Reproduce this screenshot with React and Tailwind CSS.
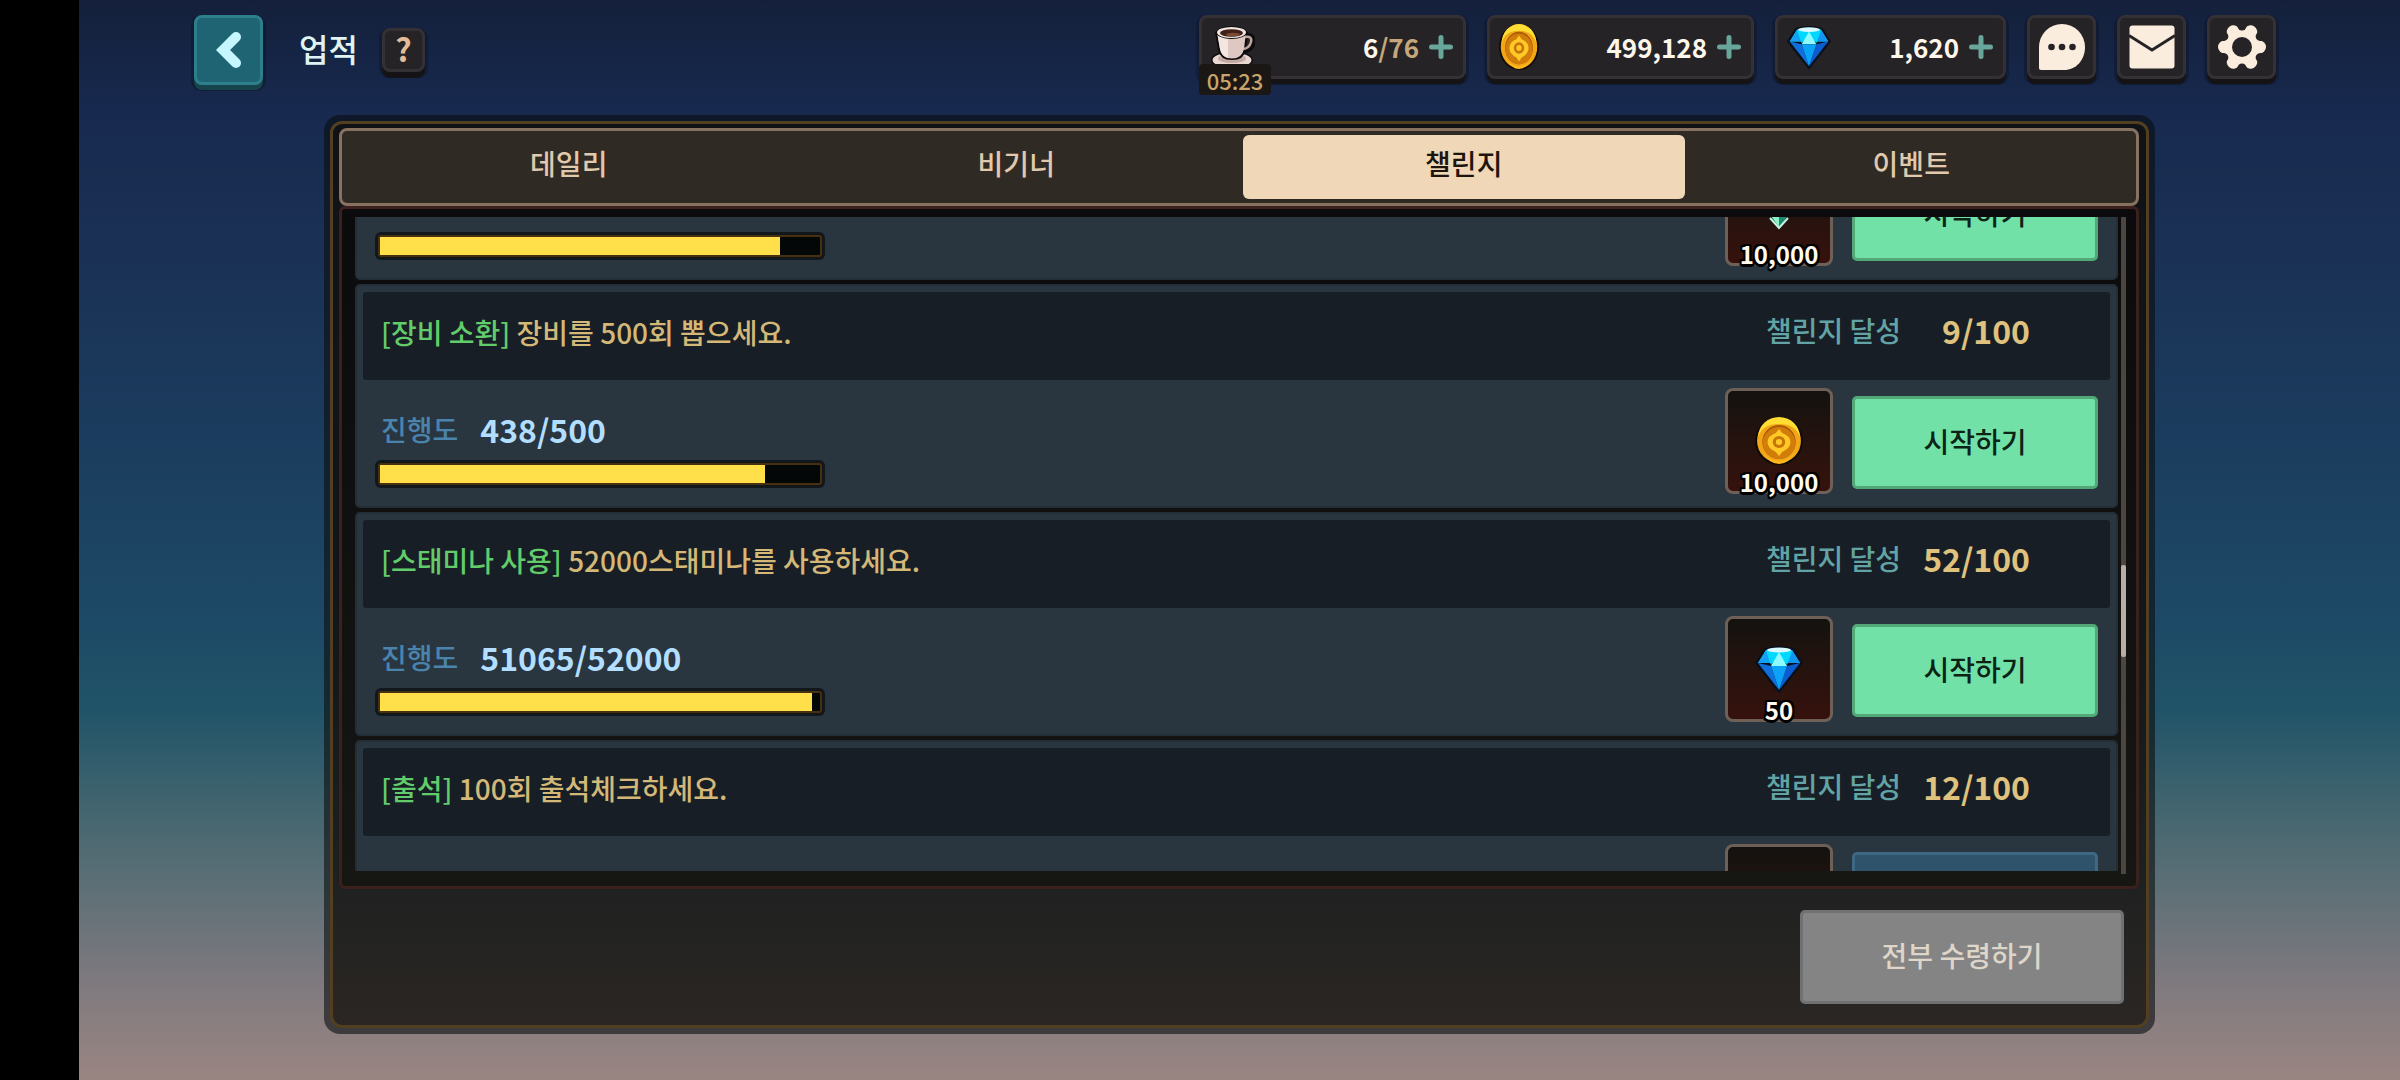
import React, { useState } from "react";

const TABS = ["데일리", "비기너", "챌린지", "이벤트"];

const CHALLENGES = [
  {
    id: 1,
    progress: 910,
    goal: 1000,
    reward: "emerald",
    amount: "10,000",
    status: "ready",
  },
  {
    id: 2,
    tag: "장비 소환",
    text: "장비를 500회 뽑으세요.",
    count: "9/100",
    progress: 438,
    goal: 500,
    reward: "coin",
    amount: "10,000",
    status: "ready",
  },
  {
    id: 3,
    tag: "스태미나 사용",
    text: "52000스태미나를 사용하세요.",
    count: "52/100",
    progress: 51065,
    goal: 52000,
    reward: "gem",
    amount: "50",
    status: "ready",
  },
  {
    id: 4,
    tag: "출석",
    text: "100회 출석체크하세요.",
    count: "12/100",
    status: "waiting",
  },
];

const CoffeeIcon = ({ className }) => (
  <svg viewBox="0 0 44 46" className={className} aria-hidden="true">
    <ellipse cx="21" cy="36" rx="21" ry="9" fill="#0c0b0d" />
    <ellipse cx="21" cy="36" rx="19.5" ry="7.5" fill="#e9d8d2" />
    <ellipse cx="21" cy="34.5" rx="14" ry="4.5" fill="#c5aaa3" />
    <path
      d="M34 12c7-2 9 2 8 7s-5 8-10 8"
      fill="none"
      stroke="#0c0b0d"
      strokeWidth="5"
    />
    <path d="M4 8h33l-2 18q-2 10-14 10T7 26z" fill="#0c0b0d" />
    <path
      d="M34 13c5-1 7 1 6 5s-4 7-9 7"
      fill="none"
      stroke="#bfa39c"
      strokeWidth="2.5"
    />
    <path d="M6 8h29l-2 17q-2 9.500-12 9.500T9 25z" fill="#dfc8c1" />
    <path d="M6 8h11v26Q10 32 9 25z" fill="#f3e6e1" />
    <ellipse cx="20.500" cy="8.500" rx="15.500" ry="6.500" fill="#0c0b0d" />
    <ellipse cx="20.500" cy="8.500" rx="14.500" ry="5.500" fill="#f2e4df" />
    <ellipse cx="20.500" cy="9" rx="11.500" ry="3.800" fill="#3f2117" />
    <ellipse cx="22" cy="10.500" rx="7" ry="1.800" fill="#7a4a34" />
  </svg>
);

const CoinIcon = ({ className }) => (
  <svg
    viewBox="0 0 46 48"
    preserveAspectRatio="none"
    className={className}
    aria-hidden="true"
  >
    <ellipse cx="23" cy="24" rx="23" ry="24" fill="#0f0b08" />
    <ellipse cx="23" cy="24" rx="21" ry="22" fill="#f2a516" />
    <path d="M3 20a20 20 0 0 1 40 0q-4-13-20-13T3 20z" fill="#ffdd33" />
    <ellipse cx="23" cy="25" rx="16" ry="17" fill="#a85c06" />
    <ellipse cx="23" cy="26" rx="15.500" ry="16" fill="#d27d0a" />
    <path
      d="M23 12l3 4q8 3 8 9t-8 10l-3 4-3-4q-8-4-8-10t8-9z"
      fill="#ffc928"
    />
    <circle cx="23" cy="25" r="6" fill="#c87508" />
    <circle cx="23" cy="25" r="3" fill="#ffc928" />
    <path d="M8 36q6 8 15 8t15-8q-6 11-15 11T8 36z" fill="#ffb81c" />
  </svg>
);

const GemIcon = ({ className }) => (
  <svg viewBox="0 0 48 48" className={className} aria-hidden="true">
    <path
      d="M10 4q14-4 28 0l9 14-23 29L1 18z"
      fill="#08101c"
      stroke="#08101c"
      strokeWidth="2"
      strokeLinejoin="round"
    />
    <path d="M11 5q13-3 26 0l8 13H3z" fill="#00c8fa" />
    <path d="M11 5L3 18h13z" fill="#14a0f5" />
    <path d="M37 5l8 13H32z" fill="#1195f0" />
    <path d="M11 6l5 14 8-13z" fill="#00d9ff" />
    <path d="M37 6l-5 14-8-13z" fill="#00d9ff" />
    <path d="M24 7l-8 14h16z" fill="#8dfbff" />
    <path d="M3 18l13 3 8 24z" fill="#0f6fdc" />
    <path d="M45 18l-13 3-8 24z" fill="#0a5cd0" />
    <path d="M16 21h16l-8 24z" fill="#0aa3f8" />
    <ellipse cx="24" cy="5" rx="12" ry="2.500" fill="#d9f8ff" />
  </svg>
);

const EmeraldIcon = ({ className }) => (
  <svg viewBox="0 0 48 48" className={className} aria-hidden="true">
    <path d="M24 0l14 18-14 22-14-22z" fill="#1f8a70" />
    <path d="M24 0v38L10 18z" fill="#8ff0c8" />
    <path d="M24 12l6 7-6 10-6-10z" fill="#2fb892" />
    <path d="M15 29l9 10 9-10" fill="none" stroke="#c4f5e0" strokeWidth="2" />
  </svg>
);

const PlusIcon = () => (
  <svg viewBox="0 0 24 24" className="h-6 w-6" aria-hidden="true">
    <path
      d="M12 2.500v19M2.500 12h19"
      stroke="#68a69c"
      strokeWidth="5"
      strokeLinecap="round"
    />
  </svg>
);

const ChevronIcon = () => (
  <svg viewBox="0 0 26 38" className="h-[38px] w-[26px]" aria-hidden="true">
    <path
      d="M20 6L7 19l13 13"
      fill="none"
      stroke="#c6f6ff"
      strokeWidth="10"
      strokeLinecap="round"
      strokeLinejoin="miter"
    />
  </svg>
);

const ChatIcon = () => (
  <svg viewBox="0 0 46 46" className="h-[46px] w-[46px]" aria-hidden="true">
    <path
      d="M23 0a23 23 0 0 1 23 23C46 36 37 46 25 46H2q-2 0-2-2V23A23 23 0 0 1 23 0z"
      fill="#fbeddd"
    />
    <circle cx="12.500" cy="23" r="3.300" fill="#262326" />
    <circle cx="23" cy="23" r="3.300" fill="#262326" />
    <circle cx="33.500" cy="23" r="3.300" fill="#262326" />
  </svg>
);

const MailIcon = () => (
  <svg viewBox="0 0 46 44" className="h-[44px] w-[46px]" aria-hidden="true">
    <rect x="0.500" y="0.500" width="45" height="43" rx="3" fill="#fbeddd" />
    <path
      d="M0 10.500L23 25l23-14.500"
      fill="none"
      stroke="#262326"
      strokeWidth="2.800"
    />
  </svg>
);

const LOBES = [0, 60, 120, 180, 240, 300];

const GearIcon = () => (
  <svg viewBox="0 0 48 48" className="h-[48px] w-[48px]" aria-hidden="true">
    <mask id="gear">
      <circle cx="24" cy="24" r="19" fill="white" />
      {LOBES.map((a) => (
        <circle
          key={a}
          cx="41.500"
          cy="24"
          r="6.500"
          fill="white"
          transform={`rotate(${a} 24 24)`}
        />
      ))}
      {LOBES.map((a) => (
        <circle
          key={a}
          cx="45"
          cy="24"
          r="4.500"
          fill="black"
          transform={`rotate(${a + 30} 24 24)`}
        />
      ))}
      <circle cx="24" cy="24" r="10" fill="black" />
    </mask>
    <rect width="48" height="48" fill="#fbeddd" mask="url(#gear)" />
  </svg>
);

const REWARD_ICONS = { coin: CoinIcon, gem: GemIcon, emerald: EmeraldIcon };

const darkTile =
  "rounded-[8px] border-[3px] border-[#343035] bg-[#262326] shadow-[0_5px_0_#151316,0_3px_0_3px_#0e142880]";

const Resource = ({ icon, label, className, children }) => (
  <div
    className={`relative flex h-16 items-center gap-2.5 pr-2.5 pl-[9px] ${darkTile} ${className}`}
  >
    {icon}
    <span className="flex-1 text-right text-[26px] leading-8 font-bold text-[#fdf6ea]">
      {children}
    </span>
    <button type="button" aria-label={`${label} 추가`}>
      <PlusIcon />
    </button>
  </div>
);

const IconButton = ({ label, children }) => (
  <button
    type="button"
    aria-label={label}
    className={`flex h-16 w-[69px] items-center justify-center ${darkTile}`}
  >
    {children}
  </button>
);

const Header = () => (
  <header className="flex items-start justify-between pt-[15px] pr-[124px] pb-[30px] pl-[115px]">
    <div className="flex items-center">
      <button
        type="button"
        aria-label="뒤로"
        className="flex h-[70px] w-[69px] items-center justify-center rounded-[8px] border-[3px] border-[#2d7f8c] bg-[#1f6472] shadow-[0_5px_0_#17444c,0_3px_0_3px_#0e142880]"
      >
        <ChevronIcon />
      </button>
      <h1 className="ml-9 pb-1 text-[32px] leading-10 font-medium text-[#dff3f2]">
        업적
      </h1>
      <button
        type="button"
        aria-label="도움말"
        className="ml-6 flex h-11 w-[43px] items-center justify-center rounded-[8px] border-[3px] border-[#343035] bg-[#262326] pb-1 text-[32px] leading-10 font-bold text-[#e2bd97] shadow-[0_6px_0_#151316,0_3px_0_3px_#0e142880]"
      >
        ?
      </button>
    </div>

    <div className="flex gap-[21px]">
      <Resource
        label="스태미나"
        className="w-[267px]"
        icon={<CoffeeIcon className="h-[46px] w-11" />}
      >
        6<span className="text-[#c6a77c]">/76</span>
        <span className="absolute top-[46px] -left-[3px] flex h-[31px] w-[72px] items-center justify-center rounded-[4px] bg-[#1b1714] text-[22px] leading-7 font-medium text-[#c9a46c]">
          05:23
        </span>
      </Resource>
      <Resource
        label="골드"
        className="w-[267px]"
        icon={<CoinIcon className="h-[46px] w-10" />}
      >
        499,128
      </Resource>
      <Resource
        label="다이아"
        className="w-[231px]"
        icon={<GemIcon className="h-11 w-11" />}
      >
        1,620
      </Resource>
      <IconButton label="채팅">
        <ChatIcon />
      </IconButton>
      <IconButton label="우편">
        <MailIcon />
      </IconButton>
      <IconButton label="설정">
        <GearIcon />
      </IconButton>
    </div>
  </header>
);

const ProgressBar = ({ value, max }) => (
  <div
    role="progressbar"
    aria-label="진행도"
    aria-valuenow={value}
    aria-valuemax={max}
    className="h-7 w-[450px] rounded-[6px] bg-[#11171b] p-[3px]"
  >
    <div className="h-full rounded-[3px] border-2 border-[#46300f] bg-[#040707]">
      <div
        className="h-full bg-[#ffdf4a]"
        style={{ width: `${(value / max) * 100}%` }}
      />
    </div>
  </div>
);

const Reward = ({ type, amount }) => {
  const Icon = REWARD_ICONS[type];
  return (
    <div className="relative mt-2 flex h-[106px] w-[108px] items-center justify-center rounded-[8px] border-[3px] border-[#6e5f57] bg-linear-to-b from-[#13120f] to-[#36110c]">
      {Icon && <Icon className="h-12 w-12" />}
      {amount && (
        <span className="absolute inset-x-0 -bottom-[3px] text-center text-[24px] leading-6 font-bold text-[#fffaf0] [text-shadow:2px_0_#000,-2px_0_#000,0_2px_#000,0_-2px_#000,2px_2px_#000,-2px_2px_#000,2px_-2px_#000,-2px_-2px_#000,0_3px_#000]">
          {amount}
        </span>
      )}
    </div>
  );
};

const ChallengeCard = ({ item }) => (
  <li className="h-56 shrink-0 rounded-[5px] border-2 border-[#232e36] bg-[#29353f] px-1.5 pt-1.5">
    <div className="flex h-[88px] items-center justify-between rounded-[3px] bg-[#181e25] pr-20 pb-2 pl-[18px] text-[28px] leading-10 font-medium">
      {item.text && (
        <>
          <p className="text-[#d3b878]">
            <span className="text-[#62cc6b]">[{item.tag}]</span> {item.text}
          </p>
          <p className="flex items-center pb-1 text-[#62a3a5]">
            챌린지 달성
            <span className="w-[129px] text-right text-[32px] font-bold text-[#dfc27d]">
              {item.count}
            </span>
          </p>
        </>
      )}
    </div>
    <div className="flex items-start justify-between px-3">
      <div className="pt-[29px]">
        <div className="h-10">
          {item.text && item.goal && (
            <p className="flex items-center gap-[22px] pl-1.5 text-[28px] leading-10 font-medium text-[#4a84ad]">
              진행도
              <span className="text-[32px] font-bold text-[#b2deff]">
                {item.progress}/{item.goal}
              </span>
            </p>
          )}
        </div>
        <div className="mt-[11px]">
          {item.goal && <ProgressBar value={item.progress} max={item.goal} />}
        </div>
      </div>
      <div className="flex items-start gap-[19px]">
        <Reward type={item.reward} amount={item.amount} />
        {item.status === "ready" ? (
          <button
            type="button"
            className="mt-4 h-[93px] w-[246px] rounded-[5px] border-[3px] border-[#52a877] bg-[#72e1a7] pb-1 text-[28px] leading-10 font-medium text-[#0c2416]"
          >
            시작하기
          </button>
        ) : (
          <button
            type="button"
            aria-label="진행중"
            className="mt-4 h-[93px] w-[246px] rounded-[5px] border-[3px] border-[#3e6884] bg-[#2f536b]"
          />
        )}
      </div>
    </div>
  </li>
);

const App = () => {
  const [tab, setTab] = useState("챌린지");

  return (
    <div className="h-screen bg-black pl-[79px] font-['Noto_Sans_CJK_KR',sans-serif]">
      <div className="flex h-full flex-col bg-linear-[180deg,#14203b_0%,#17294e_10%,#1a3054_22%,#1b3c5e_40%,#1d4a66_58%,#215468_66%,#43656f_75%,#647278_84%,#7b787e_90%,#8b7f80_95%,#9a8582_100%]">
        <Header />

        <main className="mr-[245px] mb-[46px] ml-[245px] flex min-h-0 flex-1 rounded-[16px] bg-[#0a0d10]/60 p-1.5">
          <div className="flex min-w-0 flex-1 flex-col rounded-[12px] border-[3px] border-[#523f20] bg-linear-[180deg,#101216_0%,#121519_50%,#1d2020_82%,#252422_92%,#2b2623_100%] pt-1 pr-[7px] pl-1.5">
            <div
              role="tablist"
              className="flex h-[78px] shrink-0 gap-1.5 rounded-[8px] border-[3px] border-[#877262] bg-[#302a24] py-1 pr-1 pl-1.5"
            >
              {TABS.map((name) => (
                <button
                  key={name}
                  type="button"
                  role="tab"
                  aria-selected={tab === name}
                  onClick={() => setTab(name)}
                  className={`flex-1 rounded-[6px] pb-2 text-[28px] leading-10 font-medium ${
                    tab === name
                      ? "bg-[#f0d7b8] text-[#1c150e]"
                      : "text-[#e0c9ad]"
                  }`}
                >
                  {name}
                </button>
              ))}
            </div>

            <section className="flex min-h-0 flex-1 gap-[3px] rounded-[6px] border-[3px] border-[#3c201d] bg-linear-to-b from-[#0b0b0d] to-[#161613] pt-2 pr-2.5 pb-3 pl-[13px]">
              <div className="mb-[3px] flex-1 overflow-hidden">
                {/* list is scrolled partway through the first card */}
                <ul className="-mt-[161px] flex flex-col gap-1">
                  {CHALLENGES.map((item) => (
                    <ChallengeCard key={item.id} item={item} />
                  ))}
                </ul>
              </div>
              <div className="relative w-[5px] bg-[#4d463f]">
                <div className="absolute inset-x-0 top-[53%] h-[14%] rounded-[2px] bg-[#b9ada4]" />
              </div>
            </section>

            <div className="flex justify-end py-[21px] pr-[15px]">
              <button
                type="button"
                className="h-[94px] w-[324px] rounded-[5px] border-[3px] border-[#707172] bg-[#848484] pb-1 text-[28px] leading-10 font-medium text-[#ddd6c9]"
              >
                전부 수령하기
              </button>
            </div>
          </div>
        </main>
      </div>
    </div>
  );
};

export default App;
